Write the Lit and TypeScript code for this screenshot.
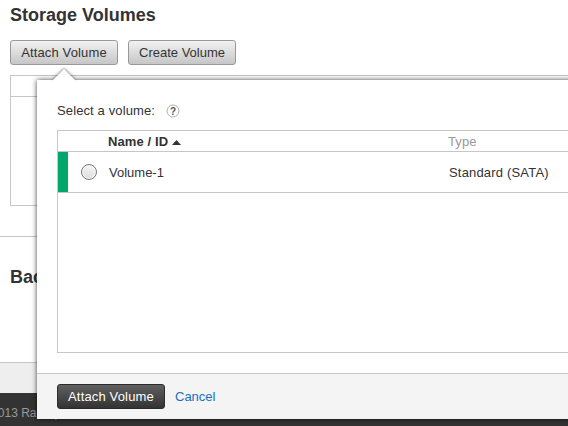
import { LitElement, html, css } from "lit";
import { customElement } from "lit/decorators.js";

@customElement("volume-popover")
class VolumePopover extends LitElement {
  static styles = css`
    :host {
      display: flex;
      flex-direction: column;
      box-sizing: border-box;
      height: 339px;
      background: #fff;
      box-shadow: 0 0 5px rgba(0, 0, 0, 0.75);
    }
    .arrow {
      position: absolute;
      left: 16px;
      top: -12px;
      width: 22px;
      height: 13px;
      overflow: visible;
      filter: drop-shadow(0 -1px 1.5px rgba(0, 0, 0, 0.45));
      clip-path: inset(-6px -6px 0 -6px);
    }
    .body {
      flex: 1;
      padding: 23px 0 0 20px;
    }
    .prompt {
      display: flex;
      align-items: center;
      height: 16px;
      gap: 11px;
      letter-spacing: 0.12px;
    }
    .help {
      width: 14px;
      height: 14px;
    }
    .mark {
      font: bold 10px "Liberation Sans", Arial, sans-serif;
      letter-spacing: 0;
      fill: #555;
    }
    .table {
      box-sizing: border-box;
      height: 223px;
      margin-top: 11px;
      border: 1px solid #c6c6c6;
      border-right: 0;
    }
    .head,
    .row {
      display: grid;
      align-items: center;
      border-bottom: 1px solid #c6c6c6;
    }
    .head {
      grid-template-columns: 50px 340px 1fr;
      height: 20px;
      line-height: 18px;
    }
    .row {
      grid-template-columns: 10px 41px 340px 1fr;
      height: 40px;
      line-height: 18px;
    }
    .name {
      font-weight: bold;
      letter-spacing: 0.1px;
      display: flex;
      align-items: center;
      gap: 4px;
    }
    .label {
      padding-top: 2px;
    }
    .sort {
      width: 9px;
      height: 5px;
      margin-top: 3px;
    }
    .type {
      color: #999;
      padding-top: 2px;
      letter-spacing: 0.1px;
    }
    .kind {
      letter-spacing: 0.18px;
    }
    .status {
      align-self: stretch;
      background: #00a86b;
    }
    .radio {
      box-sizing: border-box;
      width: 16px;
      height: 16px;
      margin-left: 13px;
      border: 1px solid #777;
      border-radius: 50%;
      background: linear-gradient(#f5f5f5, #dedede);
      box-shadow: inset 0 0 0 1px #fafafa;
    }
    .actions {
      box-sizing: border-box;
      height: 46px;
      padding: 10px 0 0 20px;
      border-top: 1px solid #c6c6c6;
      background: #f4f4f4;
      display: flex;
      gap: 10px;
    }
    .primary {
      box-sizing: border-box;
      width: 108px;
      height: 25px;
      border: 1px solid #2b2b2b;
      border-radius: 3px;
      background: linear-gradient(#606060, #333);
      color: #fff;
      font: inherit;
      letter-spacing: 0.16px;
      padding: 0;
    }
    .cancel {
      color: #1a6ec0;
      line-height: 25px;
    }
  `;

  render() {
    return html`
      <svg class="arrow" viewBox="0 0 22 13"><path d="M0 13V12L11 1L22 12V13Z" fill="#fff" /></svg>
      <div class="body">
        <div class="prompt">
          <span>Select a volume:</span>
          <svg class="help" viewBox="0 0 14 14">
            <circle cx="7" cy="7" r="6" fill="#fff" stroke="#b0b0b0" />
            <text class="mark" x="7" y="10.5" text-anchor="middle">?</text>
          </svg>
        </div>
        <div class="table">
          <div class="head">
            <span></span>
            <span class="name"><span class="label">Name / ID</span>
              <svg class="sort" viewBox="0 0 9 5"><path d="M4.5 0L9 5H0Z" fill="#333" /></svg>
            </span>
            <span class="type">Type</span>
          </div>
          <div class="row">
            <span class="status"></span>
            <span class="radio"></span>
            <span class="label">Volume-1</span>
            <span class="label kind">Standard (SATA)</span>
          </div>
        </div>
      </div>
      <div class="actions">
        <button class="primary">Attach Volume</button>
        <span class="cancel">Cancel</span>
      </div>
    `;
  }
}

@customElement("app-root")
class AppRoot extends LitElement {
  static styles = css`
    :host {
      display: flex;
      flex-direction: column;
      position: relative;
      width: 568px;
      height: 426px;
      overflow: hidden;
      background: #fff;
      color: #333;
      font: 13px/16px "Liberation Sans", Arial, sans-serif;
    }
    .storage {
      box-sizing: border-box;
      height: 237px;
      padding: 4px 0 0 10px;
      border-bottom: 1px solid #c6c6c6;
    }
    .title {
      margin: 0;
      font-size: 18px;
      line-height: 22px;
      font-weight: bold;
    }
    .buttons {
      display: flex;
      gap: 10px;
      margin-top: 14px;
    }
    .button {
      box-sizing: border-box;
      width: 108px;
      height: 25px;
      padding: 0;
      border: 1px solid #999;
      border-radius: 3px;
      background: linear-gradient(#f2f2f2, #c6c6c6);
      color: #333;
      font: inherit;
    }
    .attach {
      letter-spacing: 0.14px;
    }
    .list {
      box-sizing: border-box;
      height: 131px;
      margin-top: 10px;
      border: 1px solid #c6c6c6;
      border-right: 0;
    }
    .list-head {
      height: 20px;
      border-bottom: 1px solid #c6c6c6;
    }
    .backups {
      flex: 1;
      padding: 29px 0 0 10px;
    }
    .band {
      box-sizing: border-box;
      height: 31px;
      border-top: 1px solid #c6c6c6;
      background: #eee;
    }
    .footer {
      box-sizing: border-box;
      height: 33px;
      padding-top: 12px;
      background: #333;
      color: #999;
      font-size: 12px;
      white-space: nowrap;
    }
    .legal {
      margin-left: -21px;
    }
    .popover {
      position: absolute;
      left: 37px;
      top: 80px;
      width: 560px;
    }
  `;

  render() {
    return html`
      <section class="storage">
        <h2 class="title">Storage Volumes</h2>
        <div class="buttons">
          <button class="button attach">Attach Volume</button>
          <button class="button">Create Volume</button>
        </div>
        <div class="list"><div class="list-head"></div></div>
      </section>
      <section class="backups"><h2 class="title">Backups</h2></section>
      <div class="band"></div>
      <footer class="footer"><span class="legal">© 2013 Rackspace, US Inc.</span></footer>
      <volume-popover class="popover"></volume-popover>
    `;
  }
}
